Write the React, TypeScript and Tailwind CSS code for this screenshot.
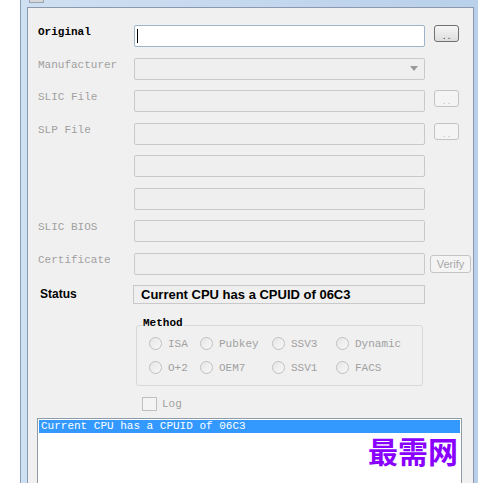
const mono = "font-['Liberation_Mono',monospace] text-[11px]";

const Dots = ({ disabled }: { disabled?: boolean }) => (
  <div
    className={`ml-[9px] w-[25px] h-[17px] rounded-[3px] border flex items-end justify-center pb-[1px] text-[9px] leading-none ${
      disabled
        ? "border-[#c4c4c4] bg-[#f4f4f4] text-[#b8b8b8]"
        : "border-[#707070] bg-gradient-to-b from-[#f6f6f6] to-[#dddddd] text-[#222]"
    }`}
  >
    . .
  </div>
);

const Field = ({
  label,
  bold,
  active,
  combo,
  button,
  verify,
}: {
  label?: string;
  bold?: boolean;
  active?: boolean;
  combo?: boolean;
  button?: "on" | "off";
  verify?: boolean;
}) => (
  <div className="flex items-start h-[22px]">
    <div
      className={`w-[96px] leading-[15px] ${mono} ${
        bold ? "font-bold text-black" : "text-[#a0a0a0]"
      }`}
    >
      {label}
    </div>
    <div
      className={`w-[291px] h-[22px] rounded-[2px] border flex items-center ${
        active
          ? "bg-white border-[#9fb4c8]"
          : "bg-[#efefef] border-[#c9c9c9]"
      }`}
    >
      {active && <div className="ml-[2px] w-[1px] h-[14px] bg-black" />}
      {combo && (
        <div className="ml-auto mr-[6px] w-0 h-0 border-l-[4px] border-r-[4px] border-t-[5px] border-l-transparent border-r-transparent border-t-[#9a9a9a]" />
      )}
    </div>
    {button && <Dots disabled={button === "off"} />}
    {verify && (
      <div className="ml-[5px] mt-[2px] w-[41px] h-[18px] rounded-[3px] border border-[#c4c4c4] bg-[#f4f4f4] text-[#a8a8a8] text-[11px] font-['Liberation_Sans',sans-serif] flex items-center justify-center">
        Verify
      </div>
    )}
  </div>
);

const Radio = ({ text }: { text: string }) => (
  <div className="flex items-center h-[14px]">
    <div className="w-[13px] h-[13px] rounded-full border border-[#c0c0c0] bg-gradient-to-br from-[#e6e6e6] to-[#f8f8f8]" />
    <span className={`ml-[6px] ${mono} text-[#a0a0a0]`}>{text}</span>
  </div>
);

export default function App() {
  return (
    <div className="w-[478px] h-[483px] bg-white overflow-hidden relative flex">
      <div className="ml-[20px] flex-1 flex flex-col border-l border-[#8c9cb0] bg-gradient-to-r from-[#cfe0f2] to-[#b9d0ea] pt-[7px] pl-[6px] pr-[4px] relative">
        <div className="absolute left-[8px] top-0 w-[15px] h-[3px] bg-[#d8d8d8] border border-t-0 border-[#9aa6b4]" />
        <div className="flex-1 bg-[#f0f0f0] border-l border-t border-r border-[#8a99ad] pl-[10px] pt-[17px] flex flex-col">
          <div className="flex flex-col gap-[10.57px]">
            <Field label="Original" bold active button="on" />
            <Field label="Manufacturer" combo />
            <Field label="SLIC File" button="off" />
            <Field label="SLP File" button="off" />
            <Field />
            <Field />
            <Field label="SLIC BIOS" />
            <Field label="Certificate" verify />
          </div>

          <div className="mt-[10px] flex items-center h-[19px]">
            <div className="w-[95px] pl-[2px] font-['Liberation_Sans',sans-serif] font-bold text-[12px] text-black">
              Status
            </div>
            <div className="w-[292px] h-[19px] border border-[#c9c9c9] bg-[#efefef] pl-[7px] flex items-center font-['Liberation_Sans',sans-serif] font-bold text-[13px] text-black">
              Current CPU has a CPUID of 06C3
            </div>
          </div>

          <div className="mt-[21px] ml-[98px] w-[287px] h-[61px] border border-[#d8d8d8] rounded-[3px] relative pl-[12px] pt-[11px]">
            <div className={`absolute left-[5px] top-[-11px] px-[1px] bg-[#f0f0f0] ${mono} font-bold text-black leading-[16px]`}>
              Method
            </div>
            <div className="grid grid-cols-[51px_72px_64px_auto] gap-y-[10px]">
              <Radio text="ISA" />
              <Radio text="Pubkey" />
              <Radio text="SSV3" />
              <Radio text="Dynamic" />
              <Radio text="O+2" />
              <Radio text="OEM7" />
              <Radio text="SSV1" />
              <Radio text="FACS" />
            </div>
          </div>

          <div className="mt-[11px] ml-[104px] flex items-center h-[14px]">
            <div className="w-[15px] h-[14px] border border-[#c0c0c0] bg-[#f4f4f4]" />
            <span className={`ml-[5px] ${mono} text-[#a0a0a0]`}>Log</span>
          </div>

          <div className="mt-[7px] -ml-[1px] w-[425px] flex-1 border border-b-0 border-[#8e9aa8] bg-white pt-[1px] px-[1px] relative">
            <div className={`h-[13px] bg-[#3399ff] text-white ${mono} leading-[13px] pl-[2px]`}>
              Current CPU has a CPUID of 06C3
            </div>
            <div className="absolute right-[3px] top-[16px] text-[#8a00ff] text-[30px] font-bold leading-none font-['Noto_Sans_CJK_SC',sans-serif]">
              最需网
            </div>
          </div>
        </div>
      </div>
    </div>
  );
}
